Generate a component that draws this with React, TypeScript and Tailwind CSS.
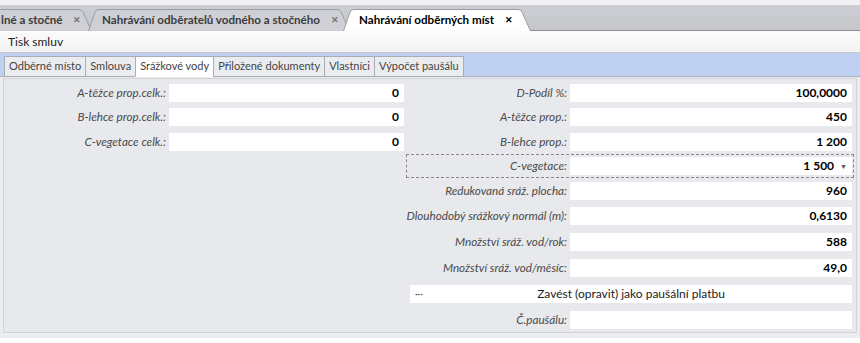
import React from "react";

const font = { fontFamily: 'Lato, "Open Sans", sans-serif' };

type DocTab = { title: string; left: number; width: number; active?: boolean; textX: number };

const docTabs: DocTab[] = [
  { title: "lné a stočné", left: -14, width: 106, textX: 15 },
  { title: "Nahrávání odběratelů vodného a stočného", left: 88, width: 262, textX: 14 },
  { title: "Nahrávání odběrných míst", left: 343, width: 188, textX: 16, active: true },
];

const DocTabShape = ({ w, active }: { w: number; active?: boolean }) => (
  <svg className="absolute inset-0" width={w} height={23} viewBox={`0 0 ${w} 23`}>
    <path
      d={`M0.5 23 L7 4 Q8 1.5 11 1.5 L${w - 13} 1.5 Q${w - 10} 1.5 ${w - 9} 4 L${w - 0.5} 23`}
      fill={active ? "#ffffff" : "#cfd0d5"}
      stroke="#9a9ca3"
      strokeWidth="1"
    />
  </svg>
);

const sheetTabs = ["Odběrné místo", "Smlouva", "Srážkové vody", "Přiložené dokumenty", "Vlastníci", "Výpočet paušálu"];

const Field = ({
  label,
  value,
  drop,
  labelW,
  inputW,
  h = 25,
}: {
  label: string;
  value?: string;
  drop?: boolean;
  labelW: number;
  inputW: number;
  h?: number;
}) => (
  <div className="flex items-center whitespace-nowrap" style={{ height: h }}>
    <div
      className="shrink-0 pr-[3px] text-right text-[11.7px] italic text-[#4a4a4a]"
      style={{ width: labelW }}
    >
      {label}
    </div>
    <div
      className="flex h-[18px] shrink-0 items-center justify-end bg-white pr-[5px] text-[12px] font-bold text-black"
      style={{ width: inputW }}
    >
      {value}
      {drop && <span className="ml-[6px] text-[7px] text-[#555]">▼</span>}
    </div>
  </div>
);

export default function App() {
  return (
    <div className="h-[343px] w-[860px] overflow-hidden whitespace-nowrap bg-white" style={font}>
      {/* document tabs */}
      <div className="h-[5px] bg-[#f1f1f3]" />
      <div className="relative h-[26px] border-b border-[#8f9096] bg-gradient-to-b from-[#cdced3] to-[#c6c7cc]">
        {docTabs.map((t) => (
          <div
            key={t.title}
            className={`absolute top-[3px] h-[23px] ${t.active ? "z-10" : ""}`}
            style={{ left: t.left, width: t.width }}
          >
            <DocTabShape w={t.width} active={t.active} />
            <div
              className="relative flex h-full items-center gap-[11px] text-[11.6px] font-bold text-[#3c3c3c]"
              style={{ paddingLeft: t.textX }}
            >
              <span className={t.active ? "text-black" : ""}>{t.title}</span>
              <span className={`text-[9px] ${t.active ? "text-black" : "text-[#777]"}`}>✕</span>
            </div>
          </div>
        ))}
      </div>

      {/* toolbar */}
      <div className="flex h-[22px] items-center border-b border-[#c7c8cc] bg-gradient-to-b from-[#fbfbfb] to-[#f3f3f5] pl-[8px] text-[12px] text-[#222]">
        Tisk smluv
      </div>

      {/* sheet tabs */}
      <div className="flex h-[24px] items-end border-b border-[#aab1c0] bg-[#bfd0f0] pl-[4px]">
        {sheetTabs.map((t) => {
          const active = t === "Srážkové vody";
          return (
            <div
              key={t}
              className={`-mb-px flex h-[21px] items-center border border-[#a9acb5] px-[4px] text-[11px] text-[#444] ${
                active ? "border-b-white bg-white" : "bg-[#ebecef]"
              } -ml-px first:ml-0`}
            >
              {t}
            </div>
          );
        })}
      </div>

      {/* content */}
      <div className="bg-[#ecedf0] px-[3px] pt-[1px] pb-[5px]">
        <div className="flex h-[255px] border border-[#d2d3d8] bg-[#e8e9ed] pt-[1px]">
          <div className="w-[402px] shrink-0">
            <Field label="A-těžce prop.celk.:" value="0" labelW={165} inputW={235} />
            <Field label="B-lehce prop.celk.:" value="0" labelW={165} inputW={235} h={24} />
            <Field label="C-vegetace celk.:" value="0" labelW={165} inputW={235} />
          </div>
          <div className="w-[448px] shrink-0">
            <Field label="D-Podíl %:" value="100,0000" labelW={164} inputW={282} />
            <Field label="A-těžce prop.:" value="450" labelW={164} inputW={282} h={24} />
            <Field label="B-lehce prop.:" value="1 200" labelW={164} inputW={282} />
            <div className="border border-dashed border-[#888]">
              <div className="-my-px">
                <Field label="C-vegetace:" value="1 500" drop labelW={163} inputW={282} h={24} />
              </div>
            </div>
            <Field label="Redukovaná sráž. plocha:" value="960" labelW={164} inputW={282} />
            <Field label="Dlouhodobý srážkový normál (m):" value="0,6130" labelW={164} inputW={282} h={26} />
            <Field label="Množství sráž. vod/rok:" value="588" labelW={164} inputW={282} h={26} />
            <Field label="Množství sráž. vod/měsíc:" value="49,0" labelW={164} inputW={282} h={26} />
            <div className="flex h-[26px] items-center pl-[4px]">
              <div className="relative flex h-[18px] w-[442px] items-center justify-center bg-white text-[12px] text-[#222]">
                <span className="absolute left-[5px] top-[1px] text-[10px] text-[#333]">···</span>
                Zavést (opravit) jako paušální platbu
              </div>
            </div>
            <Field label="Č.paušálu:" labelW={164} inputW={282} h={26} />
          </div>
        </div>
      </div>
    </div>
  );
}
